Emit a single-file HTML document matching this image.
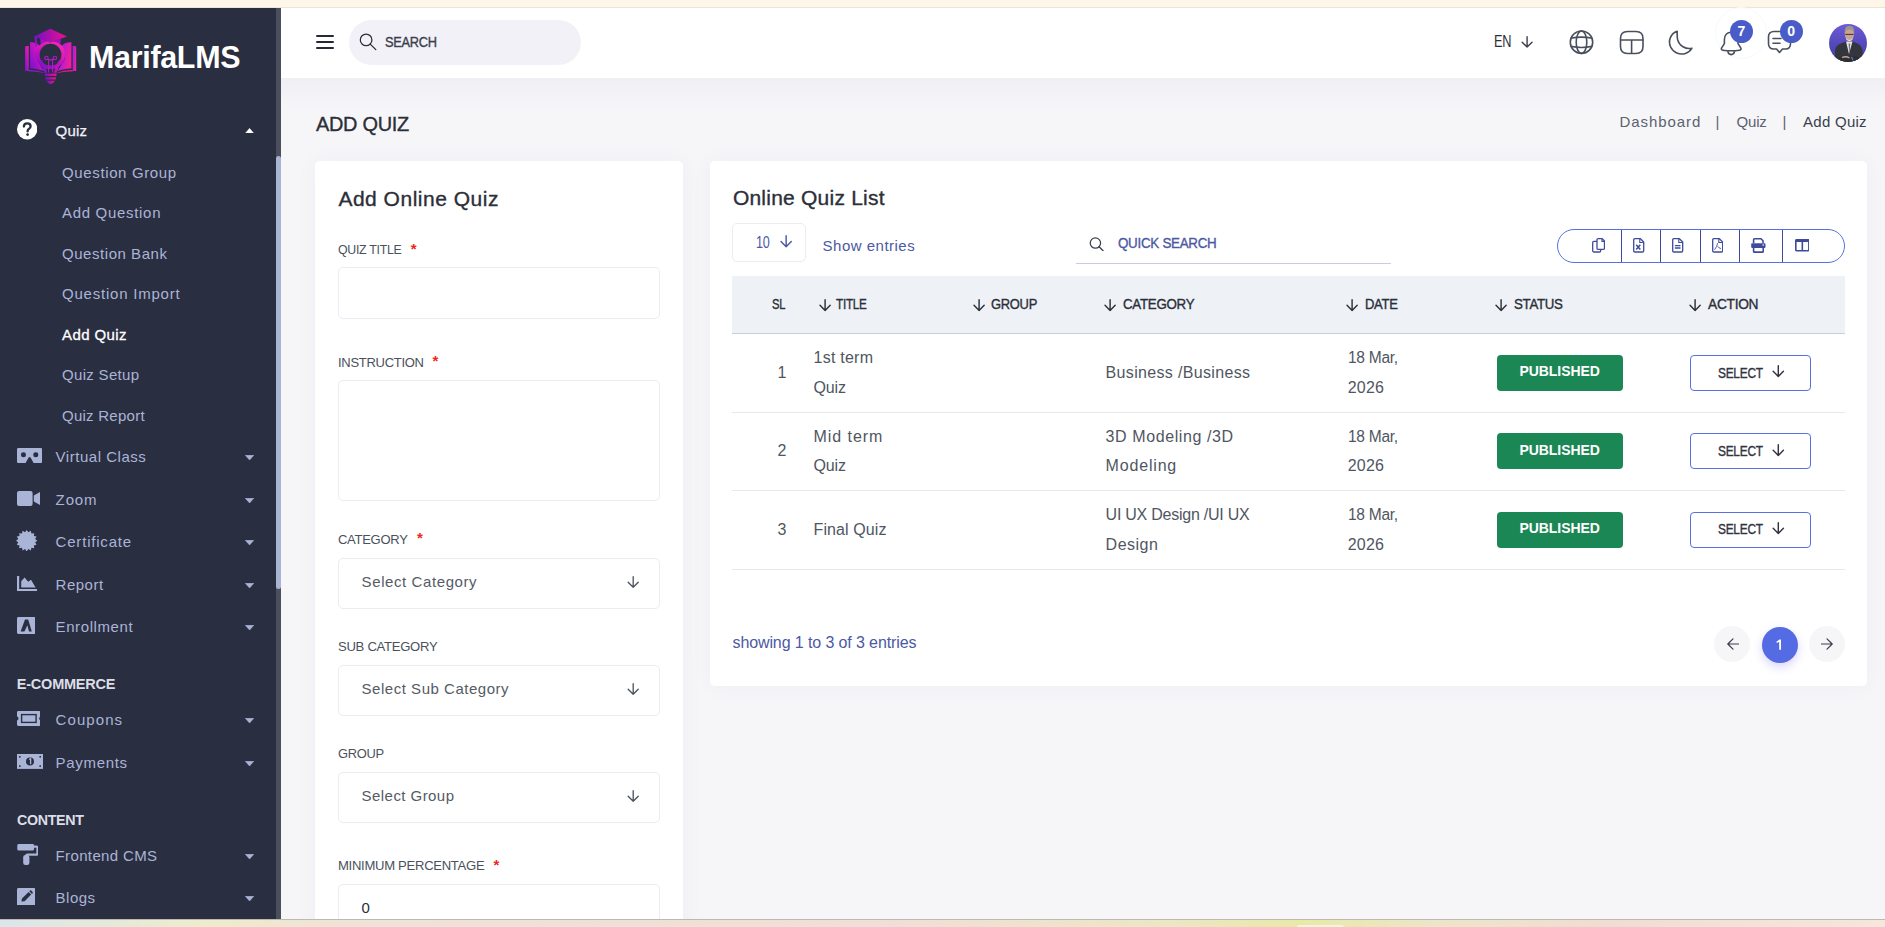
<!DOCTYPE html>
<html><head><meta charset="utf-8"><title>Add Quiz</title>
<style>
html,body{margin:0;padding:0;width:1885px;height:927px;overflow:hidden;background:#f6f6f9;font-family:"Liberation Sans",sans-serif;}
.t{position:absolute;white-space:nowrap;}
.r{position:absolute;display:block;}
</style></head><body>
<div class="r" style="left:0px;top:0px;width:1885.00px;height:8.00px;background:#fdf6e9;border-bottom:1px solid #ece4d4;box-sizing:border-box"></div>
<div class="r" style="left:0px;top:8px;width:281.00px;height:911.00px;background:#2a2e41"></div>
<div class="r" style="left:276px;top:8px;width:5.00px;height:911.00px;background:#4b4f5d"></div>
<div class="r" style="left:276px;top:156px;width:5.00px;height:433.00px;background:#a9b3d3;border-radius:3px"></div>
<div class="r" style="left:281px;top:8px;width:1604.00px;height:70.00px;background:#ffffff"></div>
<div class="r" style="left:281px;top:78px;width:1604.00px;height:841.00px;background:#f6f6f9"></div>
<div class="r" style="left:281px;top:78px;width:1604.00px;height:30.00px;background:linear-gradient(180deg,#efeff4 0%,#f2f2f6 40%,#f6f6f9 100%)"></div>
<svg class="r" style="left:20.00px;top:24.00px;width:64.00px;height:64.00px;" viewBox="0 0 64 64"><defs>
<linearGradient id="lg1" x1="0" y1="0" x2="1" y2="0.3"><stop offset="0" stop-color="#9a2ee0"/><stop offset="0.5" stop-color="#c21ad0"/><stop offset="1" stop-color="#f0209a"/></linearGradient>
<linearGradient id="lg2" x1="0" y1="1" x2="1" y2="0"><stop offset="0" stop-color="#6a12c8"/><stop offset="0.55" stop-color="#c414c4"/><stop offset="1" stop-color="#f0259e"/></linearGradient>
<linearGradient id="lg3" x1="0" y1="0" x2="1" y2="0"><stop offset="0" stop-color="#7010c8"/><stop offset="1" stop-color="#f0108a"/></linearGradient>
<linearGradient id="lg4" x1="0" y1="1" x2="0.6" y2="0"><stop offset="0" stop-color="#7a10c8"/><stop offset="0.5" stop-color="#c812c0"/><stop offset="1" stop-color="#f028b0"/></linearGradient>
</defs>
<path d="M5 23Q5 22 6.5 22H8.7V47H5Z" fill="url(#lg2)"/>
<path d="M10 18.2Q13 18 17 19.6L20 22Q16 28 17 36L24 47Q16 44 10 44.5Z" fill="url(#lg2)"/>
<path d="M56.2 23Q56.2 22 54.8 22H52.7V47H56.2Z" fill="url(#lg1)"/>
<path d="M51.4 18.2Q48.5 18 44.5 19.6L41.5 22Q45.5 28 44.5 36L37.5 47Q45.5 44 51.4 44.5Z" fill="url(#lg1)"/>
<path d="M8.7 46Q17 45.5 24 48.5L24 49Q16 47 8.7 47.5Z" fill="#8a18d0"/>
<path d="M52.7 46Q44.5 45.5 37.5 48.5L37.5 49Q45.5 47 52.7 47.5Z" fill="#e0189a"/>
<circle cx="30.5" cy="30.7" r="12.7" fill="none" stroke="url(#lg4)" stroke-width="3.6"/>
<path d="M19.2 37Q22.5 42 24.6 48.8H27.2Q26 42 22 36Z" fill="#8a12cc"/>
<path d="M42 37Q38.7 42 36.6 48.8H34Q35.2 42 39.2 36Z" fill="#c012c0"/>
<path d="M24.4 49.5H36.8L36.2 52H25Z" fill="url(#lg3)"/>
<path d="M25 53.2H36.2L35.6 55.6H25.6Z" fill="url(#lg3)"/>
<path d="M26.2 56.8H35L32.5 59.6Q30.6 60.5 28.7 59.6Z" fill="url(#lg3)"/>
<g fill="none" stroke="#b018c8" stroke-width="1.1"><circle cx="26.4" cy="33.9" r="1.7"/><circle cx="34.9" cy="33.9" r="1.7"/><path d="M28 34.8Q30.6 37 33.3 34.8M28.6 35.8V48.5M32.6 35.8V48.5"/></g>
<path d="M14.1 12.4L30.4 4.8L47 12.4L30.5 18.6Z" fill="url(#lg3)"/>
<path d="M20.4 14.5V19.6Q30.5 15.5 40.6 19.6V14.5L30.5 18.6Z" fill="#a012c8"/>
<path d="M15.6 13.2L16.4 21.6" stroke="#8a14d0" stroke-width="1.9" stroke-linecap="round"/>
</svg>
<div class="t" style="left:89.00px;top:42.00px;font-size:31px;line-height:31px;color:#ffffff;font-weight:bold;letter-spacing:-0.300px;transform:scaleX(0.9815);transform-origin:0 0;">MarifaLMS</div>
<svg class="r" style="left:16.80px;top:119.30px;width:20.40px;height:20.40px;" viewBox="0 0 20.4 20.4"><circle cx="10.2" cy="10.2" r="10.2" fill="#ffffff"/><path d="M6.9 7.6Q6.9 4.4 10.3 4.4Q13.6 4.4 13.6 7.3Q13.6 9.1 11.8 10.1Q10.6 10.8 10.6 12.4" fill="none" stroke="#2a2e41" stroke-width="2.3" stroke-linecap="round"/><circle cx="10.6" cy="15.6" r="1.4" fill="#2a2e41"/></svg>
<div class="t" style="left:55.60px;top:123.00px;font-size:15px;line-height:15px;color:#f2f2f7;font-weight:normal;letter-spacing:0.217px;-webkit-text-stroke:0.25px currentColor;">Quiz</div>
<svg class="r" style="left:245.00px;top:127.60px;width:9.10px;height:5.40px;" viewBox="0 0 9 5.4"><path d="M0.3 5.4H8.7L4.5 0.4Z" fill="#ffffff" stroke="#ffffff" stroke-width="0.6" stroke-linejoin="round"/></svg>
<div class="t" style="left:62.00px;top:165.00px;font-size:15px;line-height:15px;color:#aab4d6;font-weight:normal;letter-spacing:0.631px;">Question Group</div>
<div class="t" style="left:62.00px;top:205.00px;font-size:15px;line-height:15px;color:#aab4d6;font-weight:normal;letter-spacing:0.691px;">Add Question</div>
<div class="t" style="left:62.00px;top:246.00px;font-size:15px;line-height:15px;color:#aab4d6;font-weight:normal;letter-spacing:0.546px;">Question Bank</div>
<div class="t" style="left:62.00px;top:286.00px;font-size:15px;line-height:15px;color:#aab4d6;font-weight:normal;letter-spacing:0.779px;">Question Import</div>
<div class="t" style="left:62.00px;top:327.00px;font-size:15px;line-height:15px;color:#ffffff;font-weight:normal;letter-spacing:0.400px;-webkit-text-stroke:0.3px currentColor;">Add Quiz</div>
<div class="t" style="left:62.00px;top:367.00px;font-size:15px;line-height:15px;color:#aab4d6;font-weight:normal;letter-spacing:0.311px;">Quiz Setup</div>
<div class="t" style="left:62.00px;top:408.00px;font-size:15px;line-height:15px;color:#aab4d6;font-weight:normal;letter-spacing:0.255px;">Quiz Report</div>
<div class="t" style="left:55.60px;top:449.00px;font-size:15px;line-height:15px;color:#aab4d6;font-weight:normal;letter-spacing:0.525px;">Virtual Class</div>
<svg class="r" style="left:245.00px;top:455.00px;width:9.10px;height:5.20px;" viewBox="0 0 9 5.2"><path d="M0.3 0.3H8.7L4.5 5Z" fill="#aab4d6" stroke="#aab4d6" stroke-width="0.6" stroke-linejoin="round"/></svg>
<div class="t" style="left:55.60px;top:492.00px;font-size:15px;line-height:15px;color:#aab4d6;font-weight:normal;letter-spacing:0.883px;">Zoom</div>
<svg class="r" style="left:245.00px;top:497.90px;width:9.10px;height:5.20px;" viewBox="0 0 9 5.2"><path d="M0.3 0.3H8.7L4.5 5Z" fill="#aab4d6" stroke="#aab4d6" stroke-width="0.6" stroke-linejoin="round"/></svg>
<div class="t" style="left:55.60px;top:534.00px;font-size:15px;line-height:15px;color:#aab4d6;font-weight:normal;letter-spacing:0.800px;">Certificate</div>
<svg class="r" style="left:245.00px;top:540.00px;width:9.10px;height:5.20px;" viewBox="0 0 9 5.2"><path d="M0.3 0.3H8.7L4.5 5Z" fill="#aab4d6" stroke="#aab4d6" stroke-width="0.6" stroke-linejoin="round"/></svg>
<div class="t" style="left:55.60px;top:577.00px;font-size:15px;line-height:15px;color:#aab4d6;font-weight:normal;letter-spacing:0.500px;">Report</div>
<svg class="r" style="left:245.00px;top:582.80px;width:9.10px;height:5.20px;" viewBox="0 0 9 5.2"><path d="M0.3 0.3H8.7L4.5 5Z" fill="#aab4d6" stroke="#aab4d6" stroke-width="0.6" stroke-linejoin="round"/></svg>
<div class="t" style="left:55.60px;top:619.00px;font-size:15px;line-height:15px;color:#aab4d6;font-weight:normal;letter-spacing:0.589px;">Enrollment</div>
<svg class="r" style="left:245.00px;top:624.80px;width:9.10px;height:5.20px;" viewBox="0 0 9 5.2"><path d="M0.3 0.3H8.7L4.5 5Z" fill="#aab4d6" stroke="#aab4d6" stroke-width="0.6" stroke-linejoin="round"/></svg>
<svg class="r" style="left:16.90px;top:447.90px;width:25.20px;height:15.00px;" viewBox="0 0 25.2 15"><path d="M1.2 0H24Q25.2 0 25.2 1.2V13.8Q25.2 15 24 15H16.6L13.6 9.6Q12.6 8.2 11.6 9.6L8.6 15H1.2Q0 15 0 13.8V1.2Q0 0 1.2 0Z" fill="#aab4d6"/><circle cx="6.5" cy="6.8" r="2.5" fill="#2a2e41"/><circle cx="18.8" cy="6.8" r="2.5" fill="#2a2e41"/></svg>
<svg class="r" style="left:16.60px;top:491.00px;width:23.70px;height:15.00px;" viewBox="0 0 23.7 15"><rect x="0" y="0" width="15.6" height="15" rx="2" fill="#aab4d6"/><path d="M16.8 4.4L23.7 0.6V14.4L16.8 10.6Z" fill="#aab4d6"/></svg>
<svg class="r" style="left:16.40px;top:529.60px;width:21.40px;height:21.40px;" viewBox="0 0 21.4 21.4"><polygon points="10.70,0.00 12.38,2.27 14.79,0.81 15.48,3.55 18.27,3.13 17.85,5.92 20.59,6.61 19.13,9.02 21.40,10.70 19.13,12.38 20.59,14.79 17.85,15.48 18.27,18.27 15.48,17.85 14.79,20.59 12.38,19.13 10.70,21.40 9.02,19.13 6.61,20.59 5.92,17.85 3.13,18.27 3.55,15.48 0.81,14.79 2.27,12.38 0.00,10.70 2.27,9.02 0.81,6.61 3.55,5.92 3.13,3.13 5.92,3.55 6.61,0.81 9.02,2.27" fill="#aab4d6"/></svg>
<svg class="r" style="left:16.60px;top:575.70px;width:20.80px;height:15.60px;" viewBox="0 0 20.8 15.6"><path d="M0 0H2.2V13H20.8V15.6H0Z" fill="#aab4d6"/><path d="M4.2 11.6V5.2L7.6 1.6L11.2 5.8L14 3.8L18.6 11.6Z" fill="#aab4d6"/></svg>
<svg class="r" style="left:16.60px;top:617.10px;width:18.70px;height:16.90px;" viewBox="0 0 18.7 16.9"><rect x="0" y="0" width="18.7" height="16.9" rx="1.4" fill="#aab4d6"/><path d="M3.6 14.4L8 2.6H11.2L14.8 14.4H12L10.4 8.2L7.4 14.4Z" fill="#2a2e41"/></svg>
<div class="t" style="left:16.80px;top:677.00px;font-size:14.5px;line-height:14.5px;color:#dcdee6;font-weight:bold;letter-spacing:-0.222px;">E-COMMERCE</div>
<div class="t" style="left:55.60px;top:712.00px;font-size:15px;line-height:15px;color:#aab4d6;font-weight:normal;letter-spacing:1.075px;">Coupons</div>
<svg class="r" style="left:245.00px;top:717.80px;width:9.10px;height:5.20px;" viewBox="0 0 9 5.2"><path d="M0.3 0.3H8.7L4.5 5Z" fill="#aab4d6" stroke="#aab4d6" stroke-width="0.6" stroke-linejoin="round"/></svg>
<div class="t" style="left:55.60px;top:755.00px;font-size:15px;line-height:15px;color:#aab4d6;font-weight:normal;letter-spacing:0.686px;">Payments</div>
<svg class="r" style="left:245.00px;top:760.80px;width:9.10px;height:5.20px;" viewBox="0 0 9 5.2"><path d="M0.3 0.3H8.7L4.5 5Z" fill="#aab4d6" stroke="#aab4d6" stroke-width="0.6" stroke-linejoin="round"/></svg>
<svg class="r" style="left:16.60px;top:710.70px;width:23.70px;height:15.00px;" viewBox="0 0 23.7 15"><path d="M1.4 0H22.3Q23.7 0 23.7 1.4V5.6Q22.2 5.8 22.2 7.5Q22.2 9.2 23.7 9.4V13.6Q23.7 15 22.3 15H1.4Q0 15 0 13.6V9.4Q1.5 9.2 1.5 7.5Q1.5 5.8 0 5.6V1.4Q0 0 1.4 0Z" fill="#aab4d6"/><rect x="4.6" y="3.6" width="14.5" height="7.8" fill="none" stroke="#2a2e41" stroke-width="1.4"/></svg>
<svg class="r" style="left:16.60px;top:754.10px;width:26.00px;height:14.90px;" viewBox="0 0 26 14.9"><rect x="0" y="0" width="26" height="14.9" fill="#aab4d6"/><circle cx="13" cy="7.45" r="4" fill="#2a2e41"/><path d="M12.2 5.4L13.6 4.8V10.2" stroke="#aab4d6" stroke-width="1.3" fill="none"/><g fill="#2a2e41"><rect x="2" y="2" width="1.6" height="1.6"/><rect x="22.4" y="2" width="1.6" height="1.6"/><rect x="2" y="11.3" width="1.6" height="1.6"/><rect x="22.4" y="11.3" width="1.6" height="1.6"/></g></svg>
<div class="t" style="left:16.80px;top:813.00px;font-size:14.5px;line-height:14.5px;color:#dcdee6;font-weight:bold;letter-spacing:-0.300px;transform:scaleX(0.9810);transform-origin:0 0;">CONTENT</div>
<div class="t" style="left:55.60px;top:848.00px;font-size:15px;line-height:15px;color:#aab4d6;font-weight:normal;letter-spacing:0.359px;">Frontend CMS</div>
<svg class="r" style="left:245.00px;top:854.00px;width:9.10px;height:5.20px;" viewBox="0 0 9 5.2"><path d="M0.3 0.3H8.7L4.5 5Z" fill="#aab4d6" stroke="#aab4d6" stroke-width="0.6" stroke-linejoin="round"/></svg>
<div class="t" style="left:55.60px;top:890.00px;font-size:15px;line-height:15px;color:#aab4d6;font-weight:normal;letter-spacing:0.500px;">Blogs</div>
<svg class="r" style="left:245.00px;top:895.80px;width:9.10px;height:5.20px;" viewBox="0 0 9 5.2"><path d="M0.3 0.3H8.7L4.5 5Z" fill="#aab4d6" stroke="#aab4d6" stroke-width="0.6" stroke-linejoin="round"/></svg>
<svg class="r" style="left:16.60px;top:844.20px;width:21.50px;height:20.90px;" viewBox="0 0 21.5 20.9"><rect x="0.3" y="0" width="16.8" height="6.5" rx="1.5" fill="#aab4d6"/><path d="M16.8 2.6H19.3Q20.5 2.6 20.5 3.8V9.4Q20.5 10.6 19.3 10.6H10.5Q9.3 10.6 9.3 11.8V12.5" fill="none" stroke="#aab4d6" stroke-width="2.3"/><rect x="6.2" y="11" width="6.2" height="9.9" rx="2.2" fill="#aab4d6"/></svg>
<svg class="r" style="left:16.60px;top:887.60px;width:18.50px;height:17.90px;" viewBox="0 0 18.5 17.9"><rect x="0" y="0" width="18.5" height="17.9" rx="1.4" fill="#aab4d6"/><path d="M4.4 13.4L5 10.6L11.6 4L14.2 6.6L7.6 13.2Z" fill="#2a2e41"/><path d="M12.3 3.3L13 2.6Q13.6 2 14.2 2.6L15.6 4Q16.2 4.6 15.6 5.2L14.9 5.9Z" fill="#2a2e41"/></svg>
<div class="r" style="left:349px;top:20px;width:232.00px;height:45.00px;background:#f2f1f8;border-radius:23px"></div>
<div class="r" style="left:316px;top:35px;width:18.20px;height:1.90px;background:#252a33;border-radius:1px"></div>
<div class="r" style="left:316px;top:40.9px;width:18.20px;height:1.90px;background:#252a33;border-radius:1px"></div>
<div class="r" style="left:316px;top:46.9px;width:18.20px;height:1.90px;background:#252a33;border-radius:1px"></div>
<svg class="r" style="left:358.00px;top:31.00px;width:20.00px;height:20.00px;" viewBox="0 0 20 20"><circle cx="8.1" cy="8.9" r="5.8" fill="none" stroke="#2b2f3a" stroke-width="1.25"/><path d="M12.3 13.1L17.8 18.6" stroke="#2b2f3a" stroke-width="1.3" stroke-linecap="round"/></svg>
<div class="t" style="left:385.20px;top:35.00px;font-size:14px;line-height:14px;color:#3b3f4c;font-weight:normal;letter-spacing:-0.300px;transform:scaleX(0.9147);transform-origin:0 0;-webkit-text-stroke:0.35px currentColor;">SEARCH</div>
<div class="t" style="left:1493.50px;top:34.00px;font-size:16px;line-height:16px;color:#2b2f38;font-weight:normal;letter-spacing:-0.300px;transform:scaleX(0.7973);transform-origin:0 0;">EN</div>
<svg class="r" style="left:1520.90px;top:35.80px;width:12.20px;height:11.90px;overflow:visible" viewBox="0 0 12 12"><path d="M6 0.6V11.2M1 6.2L6 11.2L11 6.2" fill="none" stroke="#3b3f4c" stroke-width="1.4" stroke-linecap="round" stroke-linejoin="round"/></svg>
<svg class="r" style="left:1569.00px;top:30.00px;width:25.00px;height:25.00px;" viewBox="0 0 25 25"><g fill="none" stroke="#4a4f5e" stroke-width="1.6"><circle cx="12.5" cy="12.2" r="11.2"/><ellipse cx="12.5" cy="12.2" rx="5.3" ry="11.2"/><path d="M1.6 8.3Q12.5 6 23.4 8.3M1.6 16.3Q12.5 18.6 23.4 16.3"/></g></svg>
<svg class="r" style="left:1619.00px;top:30.00px;width:25.50px;height:25.00px;" viewBox="0 0 25.5 25"><g fill="none" stroke="#4a4f5e" stroke-width="1.6"><path d="M1.5 8.5Q1.5 1.5 8.5 1.5H17Q24 1.5 24 8.5V16.5Q24 23.5 17 23.5H8.5Q1.5 23.5 1.5 16.5Z"/><path d="M1 10H24.5M12.6 10V24"/></g></svg>
<svg class="r" style="left:1667.50px;top:30.00px;width:25.50px;height:25.00px;" viewBox="0 0 25.5 25"><path d="M9.2 1.2C2.6 3.4 -0.2 10.8 2.6 17C5.2 22.6 11.6 25.2 17.4 23.4C20.2 22.6 22.6 20.6 23.9 18.2C17.6 19.6 11.2 15.8 9.6 9.5C9 6.7 9.1 3.8 9.2 1.2Z" fill="none" stroke="#4a4f5e" stroke-width="1.6" stroke-linejoin="round"/></svg>
<div class="r" style="left:1715px;top:6.5px;width:52.00px;height:52.00px;border:1.5px solid #f8f9fd;border-radius:50%;box-sizing:border-box"></div>
<svg class="r" style="left:1719.50px;top:29.50px;width:22.50px;height:26.00px;" viewBox="0 0 22.5 26"><g fill="none" stroke="#4a4f5e" stroke-width="1.6" stroke-linejoin="round"><path d="M11.2 2.2C7 2.2 4.4 5.4 4.4 9.8V13.6L1.8 17.6C1 18.8 1.4 20 2.8 20.2C8.4 21 14 21 19.6 20.2C21 20 21.4 18.8 20.6 17.6L18 13.6V9.8C18 5.4 15.4 2.2 11.2 2.2Z"/><path d="M7.8 21.2Q8.2 24.6 11.2 24.6Q14.2 24.6 14.6 21.2"/></g></svg>
<svg class="r" style="left:1767.00px;top:29.50px;width:25.50px;height:26.00px;" viewBox="0 0 25.5 26"><g fill="none" stroke="#4a4f5e" stroke-width="1.6" stroke-linejoin="round"><path d="M7 1.5H18.5C21.8 1.5 23.5 3.5 23.5 6.8V13.8C23.5 17 21.8 19 18.5 19H15.5L12.5 22.5L9.5 19H6.8C3.5 19 1.5 17 1.5 13.8V6.8C1.5 3.5 3.5 1.5 7 1.5Z"/><path d="M6 8.5H14M6 13.2H13" stroke-linecap="round"/></g></svg>
<div class="r" style="left:1730px;top:19.8px;width:23.00px;height:23.00px;background:#4a5cc7;border-radius:50%"></div>
<div class="t" style="left:1737.60px;top:24.00px;font-size:14px;line-height:14px;color:#ffffff;font-weight:bold;letter-spacing:0.000px;">7</div>
<div class="r" style="left:1780px;top:19.8px;width:23.00px;height:23.00px;background:#4a5cc7;border-radius:50%"></div>
<div class="t" style="left:1787.30px;top:24.00px;font-size:14px;line-height:14px;color:#ffffff;font-weight:bold;letter-spacing:0.000px;">0</div>
<svg class="r" style="left:1829.00px;top:23.80px;width:38.00px;height:38.00px;" viewBox="0 0 38 38"><defs><linearGradient id="avg" x1="0" y1="0" x2="0" y2="1"><stop offset="0" stop-color="#6e5ad8"/><stop offset="1" stop-color="#3d3ba0"/></linearGradient><clipPath id="avc"><circle cx="19" cy="19" r="19"/></clipPath></defs><circle cx="19" cy="19" r="19" fill="url(#avg)"/><g clip-path="url(#avc)"><path d="M6 40V27Q6.5 21 12 19.5L17 17.5H24L28.5 19.5Q33 21.5 33.5 28L34 40Z" fill="#35353d"/><path d="M17 17.5L20 30L23.5 17.5Z" fill="#e4e6ea"/><path d="M19.6 19.5L20.3 31L21.3 19.5Z" fill="#6a6f7c"/><ellipse cx="20.4" cy="10.2" rx="4.6" ry="6.2" fill="#c8a490"/><path d="M15.6 9.5Q15 2 20.5 1.8Q26 2 25.3 9.5Q24.2 5.6 20.5 5.6Q16.8 5.6 15.6 9.5Z" fill="#9a948f"/><path d="M16.2 10.4H24.6" stroke="#3a3333" stroke-width="1"/><path d="M16.8 13.8Q20.4 18.2 24 13.8L23.2 16Q20.4 18 17.6 16Z" fill="#ecebea"/><path d="M10 34Q15 31.5 20 33.5Q25 31 30 33.5L30 38H10Z" fill="#2e2e35"/><path d="M13 33.5Q17 31.8 20.5 34" stroke="#c8a490" stroke-width="1.3" fill="none"/><path d="M22.5 33L24 36" stroke="#4a7fc0" stroke-width="1.4"/></g></svg>
<div class="t" style="left:315.80px;top:114.00px;font-size:20px;line-height:20px;color:#2b2f38;font-weight:normal;letter-spacing:-0.300px;transform:scaleX(0.9973);transform-origin:0 0;-webkit-text-stroke:0.35px currentColor;">ADD QUIZ</div>
<div class="t" style="left:1619.40px;top:114.00px;font-size:15px;line-height:15px;color:#5b616e;font-weight:normal;letter-spacing:0.950px;">Dashboard</div>
<div class="t" style="left:1715.50px;top:114.00px;font-size:15px;line-height:15px;color:#5b616e;font-weight:normal;letter-spacing:0.000px;">|</div>
<div class="t" style="left:1736.60px;top:114.00px;font-size:15px;line-height:15px;color:#5b616e;font-weight:normal;letter-spacing:-0.217px;">Quiz</div>
<div class="t" style="left:1782.40px;top:114.00px;font-size:15px;line-height:15px;color:#5b616e;font-weight:normal;letter-spacing:0.000px;">|</div>
<div class="t" style="left:1803.10px;top:114.00px;font-size:15px;line-height:15px;color:#3a3f4b;font-weight:normal;letter-spacing:0.257px;">Add Quiz</div>
<div class="r" style="left:315px;top:161px;width:368.00px;height:779.00px;background:#fff;border-radius:5px;box-shadow:0 0 24px rgba(30,30,80,0.035)"></div>
<div class="t" style="left:338.40px;top:188.00px;font-size:21px;line-height:21px;color:#2b2f38;font-weight:normal;letter-spacing:0.507px;-webkit-text-stroke:0.35px currentColor;">Add Online Quiz</div>
<div class="t" style="left:337.90px;top:243.00px;font-size:13.5px;line-height:13.5px;color:#4b515c;font-weight:normal;letter-spacing:-0.300px;transform:scaleX(0.9126);transform-origin:0 0;">QUIZ TITLE</div>
<div class="t" style="left:410.70px;top:241.00px;font-size:15px;line-height:15px;color:#f0261e;font-weight:bold;letter-spacing:0.000px;">*</div>
<div class="r" style="left:338px;top:267px;width:322.00px;height:51.50px;border:1px solid #ebecf3;border-radius:5px;box-sizing:border-box;background:#fff"></div>
<div class="t" style="left:337.50px;top:356.00px;font-size:13.5px;line-height:13.5px;color:#4b515c;font-weight:normal;letter-spacing:-0.300px;transform:scaleX(0.9636);transform-origin:0 0;">INSTRUCTION</div>
<div class="t" style="left:432.60px;top:353.00px;font-size:15px;line-height:15px;color:#f0261e;font-weight:bold;letter-spacing:0.000px;">*</div>
<div class="r" style="left:338px;top:379.5px;width:322.00px;height:121.70px;border:1px solid #ebecf3;border-radius:5px;box-sizing:border-box;background:#fff"></div>
<div class="t" style="left:338.00px;top:533.00px;font-size:13.5px;line-height:13.5px;color:#4b515c;font-weight:normal;letter-spacing:-0.300px;transform:scaleX(0.9641);transform-origin:0 0;">CATEGORY</div>
<div class="t" style="left:416.90px;top:530.00px;font-size:15px;line-height:15px;color:#f0261e;font-weight:bold;letter-spacing:0.000px;">*</div>
<div class="r" style="left:338px;top:557.5px;width:322.00px;height:51.10px;border:1px solid #ebecf3;border-radius:5px;box-sizing:border-box;background:#fff"></div>
<div class="t" style="left:361.60px;top:574.00px;font-size:15px;line-height:15px;color:#555b65;font-weight:normal;letter-spacing:0.593px;">Select Category</div>
<svg class="r" style="left:626.50px;top:575.60px;width:12.40px;height:12.10px;overflow:visible" viewBox="0 0 12 12"><path d="M6 0.6V11.2M1 6.2L6 11.2L11 6.2" fill="none" stroke="#4b515c" stroke-width="1.3" stroke-linecap="round" stroke-linejoin="round"/></svg>
<div class="t" style="left:337.70px;top:640.00px;font-size:13.5px;line-height:13.5px;color:#4b515c;font-weight:normal;letter-spacing:-0.300px;transform:scaleX(0.9698);transform-origin:0 0;">SUB CATEGORY</div>
<div class="r" style="left:338px;top:664.5px;width:322.00px;height:51.00px;border:1px solid #ebecf3;border-radius:5px;box-sizing:border-box;background:#fff"></div>
<div class="t" style="left:361.60px;top:681.00px;font-size:15px;line-height:15px;color:#555b65;font-weight:normal;letter-spacing:0.522px;">Select Sub Category</div>
<svg class="r" style="left:626.50px;top:682.70px;width:12.40px;height:12.10px;overflow:visible" viewBox="0 0 12 12"><path d="M6 0.6V11.2M1 6.2L6 11.2L11 6.2" fill="none" stroke="#4b515c" stroke-width="1.3" stroke-linecap="round" stroke-linejoin="round"/></svg>
<div class="t" style="left:337.70px;top:747.00px;font-size:13.5px;line-height:13.5px;color:#4b515c;font-weight:normal;letter-spacing:-0.300px;transform:scaleX(0.9545);transform-origin:0 0;">GROUP</div>
<div class="r" style="left:338px;top:771.6px;width:322.00px;height:51.00px;border:1px solid #ebecf3;border-radius:5px;box-sizing:border-box;background:#fff"></div>
<div class="t" style="left:361.60px;top:788.00px;font-size:15px;line-height:15px;color:#555b65;font-weight:normal;letter-spacing:0.441px;">Select Group</div>
<svg class="r" style="left:626.50px;top:789.80px;width:12.40px;height:12.10px;overflow:visible" viewBox="0 0 12 12"><path d="M6 0.6V11.2M1 6.2L6 11.2L11 6.2" fill="none" stroke="#4b515c" stroke-width="1.3" stroke-linecap="round" stroke-linejoin="round"/></svg>
<div class="t" style="left:337.70px;top:859.00px;font-size:13.5px;line-height:13.5px;color:#4b515c;font-weight:normal;letter-spacing:-0.300px;transform:scaleX(0.9683);transform-origin:0 0;">MINIMUM PERCENTAGE</div>
<div class="t" style="left:493.50px;top:857.00px;font-size:15px;line-height:15px;color:#f0261e;font-weight:bold;letter-spacing:0.000px;">*</div>
<div class="r" style="left:338px;top:883.5px;width:322.00px;height:56.50px;border:1px solid #ebecf3;border-radius:5px;box-sizing:border-box;background:#fff"></div>
<div class="t" style="left:361.40px;top:900.00px;font-size:15px;line-height:15px;color:#2a2e38;font-weight:normal;letter-spacing:0.000px;">0</div>
<div class="r" style="left:710px;top:161px;width:1157.00px;height:525.00px;background:#fff;border-radius:5px;box-shadow:0 0 24px rgba(30,30,80,0.035)"></div>
<div class="t" style="left:732.90px;top:187.00px;font-size:21px;line-height:21px;color:#2b2f38;font-weight:normal;letter-spacing:0.230px;-webkit-text-stroke:0.35px currentColor;">Online Quiz List</div>
<div class="r" style="left:732px;top:222.6px;width:73.50px;height:39.90px;border:1px solid #ebecf3;border-radius:5px;box-sizing:border-box"></div>
<div class="t" style="left:756.20px;top:234.00px;font-size:16.3px;line-height:16.3px;color:#4c59a3;font-weight:normal;letter-spacing:-0.300px;transform:scaleX(0.7731);transform-origin:0 0;">10</div>
<svg class="r" style="left:780.00px;top:235.30px;width:12.30px;height:12.70px;overflow:visible" viewBox="0 0 12 12"><path d="M6 0.6V11.2M1 6.2L6 11.2L11 6.2" fill="none" stroke="#4c59a3" stroke-width="1.4" stroke-linecap="round" stroke-linejoin="round"/></svg>
<div class="t" style="left:822.60px;top:238.00px;font-size:15px;line-height:15px;color:#4c59a3;font-weight:normal;letter-spacing:0.491px;">Show entries</div>
<svg class="r" style="left:1089.00px;top:237.00px;width:15.10px;height:14.40px;" viewBox="0 0 15 15"><circle cx="6.3" cy="6.3" r="5.4" fill="none" stroke="#3b3f4c" stroke-width="1.3"/><path d="M10.2 10.2L14.3 14.3" stroke="#3b3f4c" stroke-width="1.4" stroke-linecap="round"/></svg>
<div class="t" style="left:1117.70px;top:236.00px;font-size:14px;line-height:14px;color:#4c59a3;font-weight:normal;letter-spacing:-0.300px;transform:scaleX(0.9559);transform-origin:0 0;-webkit-text-stroke:0.35px currentColor;">QUICK SEARCH</div>
<div class="r" style="left:1075.5px;top:263px;width:315.10px;height:1.00px;background:#c9cde3"></div>
<div class="r" style="left:1557px;top:229px;width:288.00px;height:34.00px;border:1px solid #5a6fe3;border-radius:17px;box-sizing:border-box"></div>
<div class="r" style="left:1621px;top:230px;width:1.20px;height:32.00px;background:#3e4b9b"></div>
<div class="r" style="left:1660px;top:230px;width:1.20px;height:32.00px;background:#3e4b9b"></div>
<div class="r" style="left:1700px;top:230px;width:1.20px;height:32.00px;background:#3e4b9b"></div>
<div class="r" style="left:1739px;top:230px;width:1.20px;height:32.00px;background:#3e4b9b"></div>
<div class="r" style="left:1782px;top:230px;width:1.20px;height:32.00px;background:#3e4b9b"></div>
<svg class="r" style="left:1592.00px;top:238.00px;width:13.20px;height:14.70px;" viewBox="0 0 13.2 14.7"><rect x="0.7" y="3.3" width="8" height="10.7" rx="1.2" fill="#fff" stroke="#3e4b9b" stroke-width="1.3"/><path d="M5 1.9Q5 0.7 6.2 0.7H10.3L12.5 2.9V10.2Q12.5 11.4 11.3 11.4H6.2Q5 11.4 5 10.2Z" fill="#fff" stroke="#3e4b9b" stroke-width="1.3" stroke-linejoin="round"/><path d="M10 0.8V3.4H12.4" fill="none" stroke="#3e4b9b" stroke-width="1.1"/></svg>
<svg class="r" style="left:1633.30px;top:238.00px;width:11.40px;height:14.70px;" viewBox="0 0 11.4 14.7"><path d="M0.7 1.9Q0.7 0.7 1.9 0.7H7.4L10.7 4V12.8Q10.7 14 9.5 14H1.9Q0.7 14 0.7 12.8Z" fill="#fff" stroke="#3e4b9b" stroke-width="1.3" stroke-linejoin="round"/><path d="M6.8 0.8V4.5H10.6" fill="none" stroke="#3e4b9b" stroke-width="1.1"/><path d="M3.2 6.8L7.3 11.6M7.3 6.8L3.2 11.6" stroke="#3e4b9b" stroke-width="1.5"/></svg>
<svg class="r" style="left:1672.30px;top:238.00px;width:11.40px;height:14.70px;" viewBox="0 0 11.4 14.7"><path d="M0.7 1.9Q0.7 0.7 1.9 0.7H7.4L10.7 4V12.8Q10.7 14 9.5 14H1.9Q0.7 14 0.7 12.8Z" fill="#fff" stroke="#3e4b9b" stroke-width="1.3" stroke-linejoin="round"/><path d="M6.8 0.8V4.5H10.6" fill="none" stroke="#3e4b9b" stroke-width="1.1"/><path d="M2.9 7.6H8.5M2.9 10H8.5" stroke="#3e4b9b" stroke-width="1.4"/></svg>
<svg class="r" style="left:1711.80px;top:238.00px;width:11.40px;height:14.70px;" viewBox="0 0 11.4 14.7"><path d="M0.7 1.9Q0.7 0.7 1.9 0.7H7.4L10.7 4V12.8Q10.7 14 9.5 14H1.9Q0.7 14 0.7 12.8Z" fill="#fff" stroke="#3e4b9b" stroke-width="1.3" stroke-linejoin="round"/><path d="M6.8 0.8V4.5H10.6" fill="none" stroke="#3e4b9b" stroke-width="1.1"/><path d="M5.6 5.2Q5.2 8.5 2.5 11.8M5.6 8.3Q6.8 10.2 9 10.6" fill="none" stroke="#3e4b9b" stroke-width="0.9"/></svg>
<svg class="r" style="left:1751.30px;top:238.00px;width:14.70px;height:14.70px;" viewBox="0 0 14.7 14.7"><path d="M2.6 5V1.8Q2.6 0.8 3.6 0.8H10L12 2.8V5" fill="none" stroke="#3e4b9b" stroke-width="1.6"/><rect x="0.2" y="5.3" width="14.3" height="4.6" rx="0.8" fill="#3e4b9b"/><rect x="2.6" y="9.2" width="9.6" height="4.9" rx="0.7" fill="#fff" stroke="#3e4b9b" stroke-width="1.6"/><rect x="11.5" y="6.4" width="1.4" height="1.2" fill="#fff"/></svg>
<svg class="r" style="left:1794.50px;top:239.10px;width:14.70px;height:12.50px;" viewBox="0 0 14.7 12.5"><rect x="0.8" y="0.8" width="13.1" height="10.9" rx="0.6" fill="none" stroke="#3e4b9b" stroke-width="1.6"/><rect x="0.8" y="0.2" width="13.1" height="2.8" fill="#3e4b9b"/><path d="M7.35 2V11.8" stroke="#3e4b9b" stroke-width="1.6"/></svg>
<div class="r" style="left:732px;top:276px;width:1113.00px;height:57.50px;background:#eef1f6;border-bottom:1px solid #c9cfe2;box-sizing:border-box"></div>
<div class="t" style="left:772.30px;top:297.00px;font-size:14px;line-height:14px;color:#2b2f38;font-weight:normal;letter-spacing:-0.300px;transform:scaleX(0.7976);transform-origin:0 0;-webkit-text-stroke:0.35px currentColor;">SL</div>
<svg class="r" style="left:819.00px;top:298.60px;width:12.20px;height:12.30px;overflow:visible" viewBox="0 0 12 12"><path d="M6 0.6V11.2M1 6.2L6 11.2L11 6.2" fill="none" stroke="#2b2f38" stroke-width="1.4" stroke-linecap="round" stroke-linejoin="round"/></svg>
<div class="t" style="left:836.20px;top:297.00px;font-size:14px;line-height:14px;color:#2b2f38;font-weight:normal;letter-spacing:-0.300px;transform:scaleX(0.8374);transform-origin:0 0;-webkit-text-stroke:0.35px currentColor;">TITLE</div>
<svg class="r" style="left:972.70px;top:298.60px;width:12.20px;height:12.30px;overflow:visible" viewBox="0 0 12 12"><path d="M6 0.6V11.2M1 6.2L6 11.2L11 6.2" fill="none" stroke="#2b2f38" stroke-width="1.4" stroke-linecap="round" stroke-linejoin="round"/></svg>
<div class="t" style="left:991.10px;top:297.00px;font-size:14px;line-height:14px;color:#2b2f38;font-weight:normal;letter-spacing:-0.300px;transform:scaleX(0.9232);transform-origin:0 0;-webkit-text-stroke:0.35px currentColor;">GROUP</div>
<svg class="r" style="left:1103.50px;top:298.60px;width:12.20px;height:12.30px;overflow:visible" viewBox="0 0 12 12"><path d="M6 0.6V11.2M1 6.2L6 11.2L11 6.2" fill="none" stroke="#2b2f38" stroke-width="1.4" stroke-linecap="round" stroke-linejoin="round"/></svg>
<div class="t" style="left:1122.60px;top:297.00px;font-size:14px;line-height:14px;color:#2b2f38;font-weight:normal;letter-spacing:-0.300px;transform:scaleX(0.9514);transform-origin:0 0;-webkit-text-stroke:0.35px currentColor;">CATEGORY</div>
<svg class="r" style="left:1345.80px;top:298.60px;width:12.20px;height:12.30px;overflow:visible" viewBox="0 0 12 12"><path d="M6 0.6V11.2M1 6.2L6 11.2L11 6.2" fill="none" stroke="#2b2f38" stroke-width="1.4" stroke-linecap="round" stroke-linejoin="round"/></svg>
<div class="t" style="left:1364.50px;top:297.00px;font-size:14px;line-height:14px;color:#2b2f38;font-weight:normal;letter-spacing:-0.300px;transform:scaleX(0.9294);transform-origin:0 0;-webkit-text-stroke:0.35px currentColor;">DATE</div>
<svg class="r" style="left:1495.20px;top:298.60px;width:12.20px;height:12.30px;overflow:visible" viewBox="0 0 12 12"><path d="M6 0.6V11.2M1 6.2L6 11.2L11 6.2" fill="none" stroke="#2b2f38" stroke-width="1.4" stroke-linecap="round" stroke-linejoin="round"/></svg>
<div class="t" style="left:1514.40px;top:297.00px;font-size:14px;line-height:14px;color:#2b2f38;font-weight:normal;letter-spacing:-0.300px;transform:scaleX(0.9468);transform-origin:0 0;-webkit-text-stroke:0.35px currentColor;">STATUS</div>
<svg class="r" style="left:1689.00px;top:298.60px;width:12.20px;height:12.30px;overflow:visible" viewBox="0 0 12 12"><path d="M6 0.6V11.2M1 6.2L6 11.2L11 6.2" fill="none" stroke="#2b2f38" stroke-width="1.4" stroke-linecap="round" stroke-linejoin="round"/></svg>
<div class="t" style="left:1707.90px;top:297.00px;font-size:14px;line-height:14px;color:#2b2f38;font-weight:normal;letter-spacing:-0.300px;transform:scaleX(0.9825);transform-origin:0 0;-webkit-text-stroke:0.35px currentColor;">ACTION</div>
<div class="r" style="left:732px;top:411.8px;width:1113.00px;height:1.00px;background:#e6e8f0"></div>
<div class="t" style="left:777.50px;top:365.00px;font-size:16px;line-height:16px;color:#50565f;font-weight:normal;letter-spacing:0.000px;">1</div>
<div class="t" style="left:813.60px;top:350.00px;font-size:16px;line-height:16px;color:#50565f;font-weight:normal;letter-spacing:0.229px;">1st term</div>
<div class="t" style="left:813.60px;top:380.00px;font-size:16px;line-height:16px;color:#50565f;font-weight:normal;letter-spacing:-0.167px;">Quiz</div>
<div class="t" style="left:1105.60px;top:365.00px;font-size:16px;line-height:16px;color:#50565f;font-weight:normal;letter-spacing:0.332px;">Business /Business</div>
<div class="t" style="left:1347.70px;top:350.00px;font-size:16px;line-height:16px;color:#50565f;font-weight:normal;letter-spacing:-0.300px;transform:scaleX(0.9719);transform-origin:0 0;">18 Mar,</div>
<div class="t" style="left:1347.70px;top:380.00px;font-size:16px;line-height:16px;color:#50565f;font-weight:normal;letter-spacing:0.200px;">2026</div>
<div class="r" style="left:1497px;top:355.0px;width:126.00px;height:35.80px;background:#1b8754;border-radius:4px"></div>
<div class="t" style="left:1519.40px;top:364.00px;font-size:14px;line-height:14px;color:#ffffff;font-weight:bold;letter-spacing:-0.038px;">PUBLISHED</div>
<div class="r" style="left:1690px;top:355.0px;width:120.70px;height:35.80px;border:1px solid #5a6fe3;border-radius:4px;box-sizing:border-box"></div>
<div class="t" style="left:1717.60px;top:366.00px;font-size:14px;line-height:14px;color:#2f3440;font-weight:normal;letter-spacing:-0.300px;transform:scaleX(0.8499);transform-origin:0 0;-webkit-text-stroke:0.35px currentColor;">SELECT</div>
<svg class="r" style="left:1771.60px;top:365.40px;width:12.60px;height:12.30px;overflow:visible" viewBox="0 0 12 12"><path d="M6 0.6V11.2M1 6.2L6 11.2L11 6.2" fill="none" stroke="#2f3440" stroke-width="1.4" stroke-linecap="round" stroke-linejoin="round"/></svg>
<div class="r" style="left:732px;top:489.7px;width:1113.00px;height:1.00px;background:#e6e8f0"></div>
<div class="t" style="left:777.50px;top:443.00px;font-size:16px;line-height:16px;color:#50565f;font-weight:normal;letter-spacing:0.000px;">2</div>
<div class="t" style="left:813.60px;top:429.00px;font-size:16px;line-height:16px;color:#50565f;font-weight:normal;letter-spacing:0.936px;">Mid term</div>
<div class="t" style="left:813.60px;top:458.00px;font-size:16px;line-height:16px;color:#50565f;font-weight:normal;letter-spacing:-0.167px;">Quiz</div>
<div class="t" style="left:1105.60px;top:429.00px;font-size:16px;line-height:16px;color:#50565f;font-weight:normal;letter-spacing:0.589px;">3D Modeling /3D</div>
<div class="t" style="left:1105.60px;top:458.00px;font-size:16px;line-height:16px;color:#50565f;font-weight:normal;letter-spacing:0.821px;">Modeling</div>
<div class="t" style="left:1347.70px;top:429.00px;font-size:16px;line-height:16px;color:#50565f;font-weight:normal;letter-spacing:-0.300px;transform:scaleX(0.9719);transform-origin:0 0;">18 Mar,</div>
<div class="t" style="left:1347.70px;top:458.00px;font-size:16px;line-height:16px;color:#50565f;font-weight:normal;letter-spacing:0.200px;">2026</div>
<div class="r" style="left:1497px;top:433.35px;width:126.00px;height:35.80px;background:#1b8754;border-radius:4px"></div>
<div class="t" style="left:1519.40px;top:443.00px;font-size:14px;line-height:14px;color:#ffffff;font-weight:bold;letter-spacing:-0.038px;">PUBLISHED</div>
<div class="r" style="left:1690px;top:433.35px;width:120.70px;height:35.80px;border:1px solid #5a6fe3;border-radius:4px;box-sizing:border-box"></div>
<div class="t" style="left:1717.60px;top:444.00px;font-size:14px;line-height:14px;color:#2f3440;font-weight:normal;letter-spacing:-0.300px;transform:scaleX(0.8499);transform-origin:0 0;-webkit-text-stroke:0.35px currentColor;">SELECT</div>
<svg class="r" style="left:1771.60px;top:443.75px;width:12.60px;height:12.30px;overflow:visible" viewBox="0 0 12 12"><path d="M6 0.6V11.2M1 6.2L6 11.2L11 6.2" fill="none" stroke="#2f3440" stroke-width="1.4" stroke-linecap="round" stroke-linejoin="round"/></svg>
<div class="r" style="left:732px;top:568.7px;width:1113.00px;height:1.00px;background:#e6e8f0"></div>
<div class="t" style="left:777.50px;top:522.00px;font-size:16px;line-height:16px;color:#50565f;font-weight:normal;letter-spacing:0.000px;">3</div>
<div class="t" style="left:813.60px;top:522.00px;font-size:16px;line-height:16px;color:#50565f;font-weight:normal;letter-spacing:0.089px;">Final Quiz</div>
<div class="t" style="left:1105.60px;top:507.00px;font-size:16px;line-height:16px;color:#50565f;font-weight:normal;letter-spacing:-0.244px;">UI UX Design /UI UX</div>
<div class="t" style="left:1105.60px;top:537.00px;font-size:16px;line-height:16px;color:#50565f;font-weight:normal;letter-spacing:0.500px;">Design</div>
<div class="t" style="left:1347.70px;top:507.00px;font-size:16px;line-height:16px;color:#50565f;font-weight:normal;letter-spacing:-0.300px;transform:scaleX(0.9719);transform-origin:0 0;">18 Mar,</div>
<div class="t" style="left:1347.70px;top:537.00px;font-size:16px;line-height:16px;color:#50565f;font-weight:normal;letter-spacing:0.200px;">2026</div>
<div class="r" style="left:1497px;top:511.80000000000007px;width:126.00px;height:35.80px;background:#1b8754;border-radius:4px"></div>
<div class="t" style="left:1519.40px;top:521.00px;font-size:14px;line-height:14px;color:#ffffff;font-weight:bold;letter-spacing:-0.038px;">PUBLISHED</div>
<div class="r" style="left:1690px;top:511.80000000000007px;width:120.70px;height:35.80px;border:1px solid #5a6fe3;border-radius:4px;box-sizing:border-box"></div>
<div class="t" style="left:1717.60px;top:522.00px;font-size:14px;line-height:14px;color:#2f3440;font-weight:normal;letter-spacing:-0.300px;transform:scaleX(0.8499);transform-origin:0 0;-webkit-text-stroke:0.35px currentColor;">SELECT</div>
<svg class="r" style="left:1771.60px;top:522.20px;width:12.60px;height:12.30px;overflow:visible" viewBox="0 0 12 12"><path d="M6 0.6V11.2M1 6.2L6 11.2L11 6.2" fill="none" stroke="#2f3440" stroke-width="1.4" stroke-linecap="round" stroke-linejoin="round"/></svg>
<div class="t" style="left:732.50px;top:635.00px;font-size:16px;line-height:16px;color:#4c59a3;font-weight:normal;letter-spacing:-0.108px;">showing 1 to 3 of 3 entries</div>
<div class="r" style="left:1714px;top:626px;width:36.00px;height:36.00px;background:#f6f6f9;border-radius:50%"></div>
<div class="r" style="left:1762px;top:627px;width:36.00px;height:36.00px;background:#546be3;border-radius:50%;box-shadow:0 4px 10px rgba(120,90,240,0.25)"></div>
<svg class="r" style="left:1775.50px;top:639.40px;width:6.50px;height:10.80px;" viewBox="0 0 6.5 10.8"><path d="M0.6 2.4L3.6 0.6H5V10.8H3.2V2.9L0.6 4.1Z" fill="#ffffff"/></svg>
<div class="r" style="left:1809px;top:626px;width:36.00px;height:36.00px;background:#f6f6f9;border-radius:50%"></div>
<svg class="r" style="left:1726.50px;top:637.80px;width:12.00px;height:12.00px;" viewBox="0 0 12 12"><path d="M11.5 6H0.8M6 0.8L0.8 6L6 11.2" fill="none" stroke="#3b3f4c" stroke-width="1.2" stroke-linecap="round" stroke-linejoin="round"/></svg>
<svg class="r" style="left:1821.00px;top:637.80px;width:12.00px;height:12.00px;" viewBox="0 0 12 12"><path d="M0.5 6H11.2M6 0.8L11.2 6L6 11.2" fill="none" stroke="#3b3f4c" stroke-width="1.2" stroke-linecap="round" stroke-linejoin="round"/></svg>
<div class="r" style="left:0px;top:919px;width:1885.00px;height:8.00px;background:linear-gradient(90deg,#dbe6ec 0%,#e4ead9 6%,#eeeccb 11%,#efe2d7 18%,#f0dfd6 48%,#ece6c4 62%,#e8e9a8 69%,#ece5c8 76%,#f0ddd2 85%,#f5e7dc 100%)"></div>
<div class="r" style="left:0px;top:919px;width:1885.00px;height:1.00px;background:#bfb8b2"></div>
<div class="r" style="left:1297px;top:925px;width:47.00px;height:2.00px;background:#f4f3dc;border-radius:3px 3px 0 0"></div>
</body></html>
